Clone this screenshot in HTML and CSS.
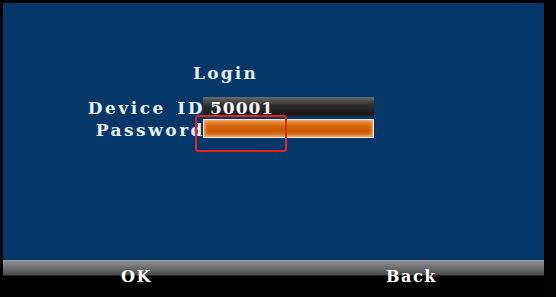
FILE: index.html
```html
<!DOCTYPE html>
<html>
<head>
    <title>Login</title>
    <link rel="stylesheet" href="styles.css">
</head>
<body>

    <div class="screen">
        <div class="panel">
            <div class="login-form">
                <div class="title">Login</div>
                <div class="fields">
                    <div class="label">Device ID</div>
                    <div class="field field-id">50001</div>
                    <div class="label">Password</div>
                    <div class="field field-pass"></div>
                </div>
            </div>
        </div>
        <div class="softkeys">
            <div class="key key-ok">OK</div>
            <div class="key key-back">Back</div>
        </div>
        <div class="highlight"></div>
    </div>

</body>
</html>
```

FILE: styles.css
```css
body {
    margin: 0;
    background: #020204;
    font-family: "DejaVu Serif", "Liberation Serif", serif;
    font-weight: bold;
    font-size: 16px;
    letter-spacing: 1.6px;
}

.screen {
    position: relative;
    width: 541px;
    margin: 3px 0 0 3px;
}

.panel {
    height: 257px;
    background: #053868;
    padding-top: 59px;
    box-sizing: border-box;
}

.login-form {
    margin-left: 80px;
}

.title {
    padding-left: 110px;
    line-height: 22px;
    font-size: 17px;
    color: #e2ecfa;
    letter-spacing: 2.2px;
    margin-bottom: 13px;
}

.fields {
    display: grid;
    grid-template-columns: 120px 171px;
    grid-auto-rows: 22px;
}

.label {
    text-align: right;
    line-height: 22px;
    font-size: 17px;
    letter-spacing: 2.5px;
    word-spacing: 3px;
    margin-right: -2px;
    color: #e8f0ff;
    white-space: nowrap;
}

.field {
    height: 19px;
    box-sizing: border-box;
    padding: 2px 0 0 7px;
    line-height: 19px;
    font-size: 17px;
    letter-spacing: 1px;
    color: #f4f4f4;
}

.field-id {
    background: linear-gradient(#6a6a6a, #2c2c2c 45%, #181818);
}

.field-pass {
    background: linear-gradient(#ea9a52, #d46608 40%, #c85800 62%, #e2853a);
    box-shadow: inset 0 0 0 1px #fbe4cf, inset 0 0 3px 2px #f1b47e;
}

.softkeys {
    display: grid;
    grid-template-columns: 267px 1fr;
    height: 37px;
    padding-top: 6px;
    box-sizing: border-box;
    background: linear-gradient(#88a2b6 0, #8c98a2 1px, #8a8a8a 2px, #4a4a4a 15px, #000 16px);
}

.key {
    text-align: center;
    line-height: 22px;
    color: #fff;
}

.key-back {
    padding-left: 9px;
}

.highlight {
    position: absolute;
    left: 192px;
    top: 112px;
    width: 92px;
    height: 37px;
    box-sizing: border-box;
    border: 2px solid #e8231f;
    border-radius: 3px;
}
```
